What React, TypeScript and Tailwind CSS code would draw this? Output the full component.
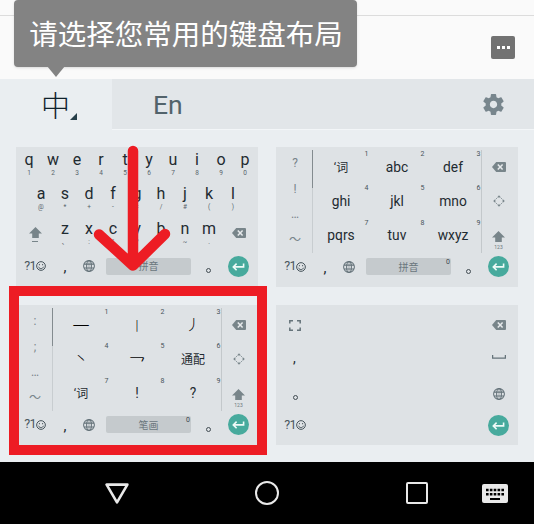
import React from "react";

const roboto = "font-['Roboto','Noto_Sans_CJK_SC',sans-serif]";
const cjk = "font-['Noto_Sans_CJK_SC',sans-serif]";

function Backspace() {
  return (
    <svg width="14" height="10" viewBox="0 0 14 10" className="shrink-0">
      <path d="M4.2 0H13a1 1 0 0 1 1 1v8a1 1 0 0 1-1 1H4.2L0 5Z" fill="#78858a" />
      <path d="M5.8 2.4l4.8 5.2M10.6 2.4L5.8 7.6" stroke="#e6e9eb" strokeWidth="1.5" />
    </svg>
  );
}

function Globe() {
  return (
    <svg width="12" height="12" viewBox="0 0 24 24" fill="none" stroke="#65737a" strokeWidth="2.1" className="shrink-0">
      <circle cx="12" cy="12" r="10.8" />
      <ellipse cx="12" cy="12" rx="4.8" ry="10.8" />
      <path d="M2 8.2h20M2 15.8h20" />
      <path d="M12 1.5v21" strokeWidth="1" />
    </svg>
  );
}

function Smile() {
  return (
    <svg width="10" height="10" viewBox="0 0 20 20" fill="none" stroke="#46535a" strokeWidth="2">
      <circle cx="10" cy="10" r="8.7" />
      <path d="M5 11.5c2 5 8 5 10 0" />
      <circle cx="6.8" cy="7.3" r="1.2" fill="#46535a" stroke="none" />
      <circle cx="13.2" cy="7.3" r="1.2" fill="#46535a" stroke="none" />
    </svg>
  );
}

function Enter() {
  return (
    <svg width="21" height="21" viewBox="0 0 21 21" className="shrink-0">
      <circle cx="10.5" cy="10.5" r="10.5" fill="#47aa9d" />
      <path d="M15.6 7.4v3.5H5.6M8.6 7.6l-3.3 3.3 3.3 3.3" fill="none" stroke="#eefaf7" strokeWidth="1.6" />
    </svg>
  );
}

function Shift() {
  return (
    <svg width="13" height="11" viewBox="0 0 13 11" className="shrink-0">
      <path d="M6.5 0L13 6.6H9.8V11H3.2V6.6H0Z" fill="#78858a" />
    </svg>
  );
}

function Move() {
  return (
    <svg width="12" height="12" viewBox="0 0 12 12" fill="#78858a">
      <path d="M6 .2L8 2.4H4ZM6 11.8L8 9.6H4ZM.2 6L2.4 4v4ZM11.8 6L9.6 4v4Z" />
      <circle cx="3.5" cy="3.5" r=".5" />
      <circle cx="8.5" cy="3.5" r=".5" />
      <circle cx="3.5" cy="8.5" r=".5" />
      <circle cx="8.5" cy="8.5" r=".5" />
    </svg>
  );
}

function Emoji() {
  return (
    <div className="flex w-9 items-center justify-center text-[12.5px] leading-none tracking-[-0.6px] text-[#4b585f]">
      <span>?1</span>
      <Smile />
    </div>
  );
}

function BottomRow({ label, zero }: { label: string; zero?: boolean }) {
  return (
    <div className="flex h-[21px] w-full items-center pl-px">
      <Emoji />
      <div className="flex w-6 justify-center pt-[3px] text-[15px] leading-none text-[#222d33]">,</div>
      <div className="flex w-6 justify-center pr-px"><Globe /></div>
      <div className={`relative ml-[5px] flex h-[17px] w-[85px] items-center justify-center rounded-xs bg-[#c5cacd] text-[10px] leading-none text-[#6b777d] ${cjk}`}>
        {label}
        {zero && <span className="absolute right-[1px] top-[1px] font-['Roboto',sans-serif] text-[7px] leading-none text-[#3c474d]">0</span>}
      </div>
      <Period className="ml-[15px] mt-[9px]" />
      <div className="ml-[16.5px]"><Enter /></div>
    </div>
  );
}

function Period({ className = "" }: { className?: string }) {
  return <div className={`size-[5px] shrink-0 rounded-full border border-[#414c52] ${className}`} />;
}

function Letter({ k, sub }: { k: string; sub: string }) {
  return (
    <div className="flex w-6 flex-col items-center text-[#1f2b31]">
      <span className="text-[16px] leading-[18px]">{k}</span>
      <span className="mt-px text-[6.5px] leading-[7px] text-[#58646b]">{sub}</span>
    </div>
  );
}

function Letters({ keys, subs }: { keys: string; subs: string }) {
  return <>{keys.split("").map((k, i) => <Letter key={k} k={k} sub={subs[i]} />)}</>;
}

function Card({ children, className = "" }: { children: React.ReactNode; className?: string }) {
  return <div className={`flex h-[140px] w-[242px] flex-col bg-[#dee2e5] ${className}`}>{children}</div>;
}

function Qwerty() {
  return (
    <Card className="pt-1">
      <div className="flex h-[34.3px] justify-center"><Letters keys="qwertyuiop" subs="1234567890" /></div>
      <div className="flex h-[34.3px] justify-center"><Letters keys="asdfghjkl" subs="@*+-=/#()" /></div>
      <div className="flex h-[34.4px] pl-px">
        <div className="flex w-9 flex-col items-center pt-[7px]">
          <Shift />
          <div className="mt-[3px] h-px w-[6px] bg-[#78858a]" />
        </div>
        <Letters keys="zxcvbnm" subs={"、:\"?!~."} />
        <div className="flex w-9 justify-center pr-px pt-[8px]"><Backspace /></div>
      </div>
      <div className="mt-[2px]"><BottomRow label="拼音" /></div>
    </Card>
  );
}

function NineKey({ side, keys, label, strokes }: { side: string[]; keys: string[]; label: string; strokes?: boolean }) {
  return (
    <Card className="pt-[3px]">
      <div className="flex h-[103px]">
        <div className="flex w-9 flex-col pl-[2px]">
          {side.map((s) => (
            <div key={s} className="flex h-[25.75px] items-center justify-center text-[12px] leading-none text-[#78848a]">{s}</div>
          ))}
        </div>
        <div className="w-px bg-[#c8cdd0]"><div className="h-[38px] bg-[#838b8f]" /></div>
        <div className="grid w-[168px] grid-cols-3 grid-rows-3">
          {keys.map((k, i) => (
            <div key={k} className={`relative flex items-center justify-center leading-none text-[#1f2b31] ${strokes && i < 5 ? "text-[17px] font-light text-black" : k.charCodeAt(k.length - 1) > 255 ? "pt-px text-[12px]" : "pt-px text-[13.8px]"}`}>
              <span className={k === "乛" ? "pt-[13px]" : k === "一" ? "pt-[2px]" : k === "丨" ? "text-[13px]" : k === "丿" || k === "丶" ? "text-[15px]" : ""}>{k}</span>
              <span className="absolute right-[0.5px] top-[1px] text-[7px] font-normal leading-[7px] text-[#46535a]">{i + 1}</span>
            </div>
          ))}
        </div>
        <div className="w-px bg-[#c3c8cb]" />
        <div className="flex w-[34px] flex-col">
          <div className="flex h-[34.3px] items-center justify-center"><Backspace /></div>
          <div className="flex h-[34.3px] items-center justify-center pr-px"><Move /></div>
          <div className="flex h-[34.3px] flex-col items-center pr-px pt-[12px]">
            <Shift />
            <span className="mt-[2px] text-[5px] leading-[6px] text-[#6b777d]">123</span>
          </div>
        </div>
      </div>
      <div className="mt-[3px]"><BottomRow label={label} zero /></div>
    </Card>
  );
}

function Handwriting() {
  return (
    <Card className="justify-between">
      <div className="flex justify-between pl-[13px] pr-[12px] pt-[15px]">
        <svg width="12" height="11" viewBox="0 0 12 11" fill="none" stroke="#65737a" strokeWidth="1.5">
          <path d="M.8 3.6V.8H4M8 .8h3.2v2.8M11.2 7.4v2.8H8M4 10.2H.8V7.4" />
        </svg>
        <Backspace />
      </div>
      <div className="flex items-center justify-between pl-[17px] pr-[12px] pt-[3px]">
        <span className="pt-[2px] text-[14px] leading-none text-[#222d33]">,</span>
        <svg width="14" height="4" viewBox="0 0 14 4" fill="none" stroke="#65737a" strokeWidth="1.3"><path d="M.6 0v3.2h12.8V0" /></svg>
      </div>
      <div className="flex items-center justify-between pl-[17px] pr-[13px] pt-[7px]">
        <Period className="mt-[7px]" />
        <Globe />
      </div>
      <div className="mb-[9px] flex items-center justify-between pl-px pr-[9px]"><Emoji /><Enter /></div>
    </Card>
  );
}

export default function App() {
  return (
    <div className={`relative flex h-[524px] w-[534px] flex-col overflow-hidden bg-[#eaeef1] ${roboto}`}>
      <header className="flex h-[79px] flex-col bg-[#fafafa]">
        <div className="h-4 shrink-0 border-b border-[#dcdcdc]" />
        <div className="ml-auto mr-[19px] mt-[20px] flex h-[23px] w-[24px] items-center justify-center gap-[2px] rounded-xs bg-[#727272]">
          <i className="size-[3px] bg-white" /><i className="size-[3px] bg-white" /><i className="size-[3px] bg-white" />
        </div>
      </header>
      <nav className="flex h-[51px] border-b border-[#f3f6f8] bg-[#e2e6e9]">
        <div className="flex h-[51px] w-[112px] items-start bg-[#eaeef1] pl-[41px] pt-[10px]">
          <span className={`text-[29px] font-light leading-[30px] text-[#10222b] ${cjk}`}>中</span>
          <svg width="7" height="7" viewBox="0 0 7 7" className="mt-[24px]"><path d="M7 0v7H0Z" fill="#263f49" /></svg>
        </div>
        <span className="ml-[41px] mt-[11px] text-[26.5px] leading-[30px] text-[#52636b]">En</span>
        <svg width="25" height="25" viewBox="0 0 24 24" className="ml-auto mr-[28px] mt-[13px]">
          <path fill="#78868d" d="M19.43 12.98c.04-.32.07-.64.07-.98s-.03-.66-.07-.98l2.11-1.65c.19-.15.24-.42.12-.64l-2-3.46c-.12-.22-.39-.3-.61-.22l-2.49 1c-.52-.4-1.08-.73-1.69-.98l-.38-2.65C14.46 2.18 14.25 2 14 2h-4c-.25 0-.46.18-.49.42l-.38 2.65c-.61.25-1.17.59-1.69.98l-2.49-1c-.23-.09-.49 0-.61.22l-2 3.46c-.13.22-.07.49.12.64l2.11 1.65c-.04.32-.07.65-.07.98s.03.66.07.98l-2.11 1.65c-.19.15-.24.42-.12.64l2 3.46c.12.22.39.3.61.22l2.49-1c.52.4 1.08.73 1.69.98l.38 2.65c.03.24.24.42.49.42h4c.25 0 .46-.18.49-.42l.38-2.65c.61-.25 1.17-.59 1.69-.98l2.49 1c.23.09.49 0 .61-.22l2-3.46c.12-.22.07-.49-.12-.64l-2.11-1.65zM12 15.5c-1.93 0-3.5-1.57-3.5-3.5s1.57-3.5 3.5-3.5 3.5 1.57 3.5 3.5-1.57 3.5-3.5 3.5z" />
        </svg>
      </nav>
      <main className="grid h-[332px] grid-cols-[242px_242px] content-start gap-[18px] px-4 pt-[17px]">
        <Qwerty />
        <NineKey side={["?", "!", "…", "～"]} keys={["‘词", "abc", "def", "ghi", "jkl", "mno", "pqrs", "tuv", "wxyz"]} label="拼音" />
        <NineKey side={[":", ";", "…", "～"]} keys={["一", "丨", "丿", "丶", "乛", "通配", "‘词", "!", "?"]} label="笔画" strokes />
        <Handwriting />
      </main>
      <footer className="flex h-[62px] items-center bg-black">
        <svg width="24" height="21" viewBox="0 0 24 21" className="ml-[105px]"><path d="M1.6 1.6h20.8L12 19.3Z" fill="none" stroke="#e9e9e9" strokeWidth="2.6" strokeLinejoin="round" /></svg>
        <div className="ml-[126px] size-[24px] rounded-full border-[2.6px] border-[#e9e9e9]" />
        <div className="ml-[127px] size-[22px] rounded-xs border-[2.6px] border-[#e9e9e9]" />
        <svg width="26" height="19" viewBox="0 0 26 19" className="ml-[54px]">
          <rect width="26" height="19" rx="2" fill="#e9e9e9" />
          <path d="M4 6h18M4 10.2h18" stroke="#000" strokeWidth="2.4" strokeDasharray="2.6 1.25" />
          <path d="M8 15h10" stroke="#000" strokeWidth="2" />
        </svg>
      </footer>
      <div className="absolute left-[14px] top-0 flex h-[67px] w-[343px] items-center justify-center rounded bg-[#838383] shadow-sm">
        <span className={`whitespace-nowrap pl-px text-[28.5px] leading-none text-white ${cjk}`}>请选择您常用的键盘布局</span>
        <svg width="18" height="11" viewBox="0 0 18 11" className="absolute left-[33px] top-[66px]"><path d="M0 0h18L9 11Z" fill="#838383" /></svg>
      </div>
      <div className="absolute left-[9px] top-[286px] h-[169px] w-[258px] border-[10px] border-[#ed1c24]" />
      <svg width="80" height="130" viewBox="0 0 80 130" className="absolute left-[93px] top-[144px]">
        <path d="M40 7v114M6 90.5L40 121.5 72 90" fill="none" stroke="#ed1c24" strokeWidth="10.5" strokeLinecap="round" strokeLinejoin="round" />
      </svg>
    </div>
  );
}
